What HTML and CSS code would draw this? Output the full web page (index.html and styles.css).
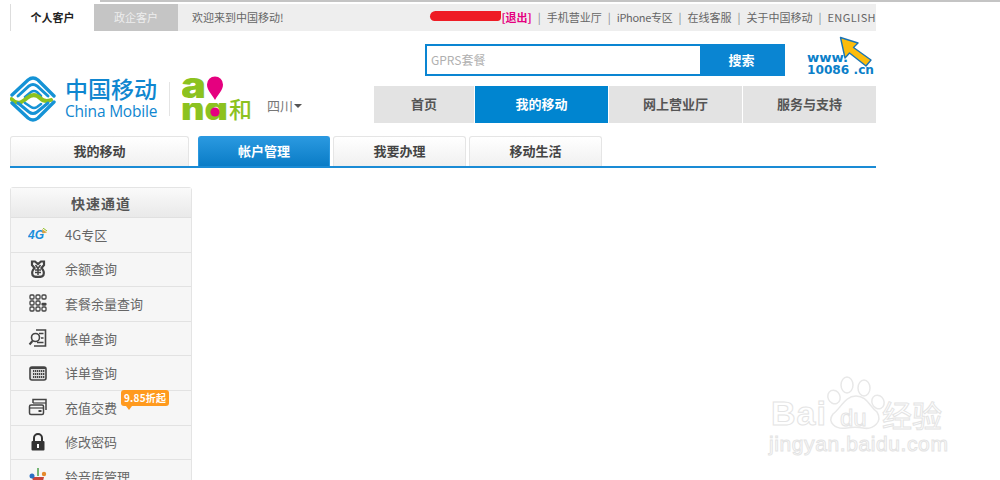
FILE: index.html
```html
<!DOCTYPE html>
<html lang="zh">
<head>
<meta charset="utf-8">
<title>中国移动</title>
<link rel="stylesheet" href="styles.css">
</head>
<body>
<div class="browser-edge"></div>
<div class="page">
  <div class="topbar">
    <a class="seg seg-on">个人客户</a>
    <a class="seg seg-off">政企客户</a>
    <span class="welcome">欢迎来到中国移动!</span>
    <div class="toplinks">
      <span class="scribble"></span><a class="logout">[退出]</a>
      <i>|</i><a>手机营业厅</a>
      <i>|</i><a class="iphone">iPhone专区</a>
      <i>|</i><a>在线客服</a>
      <i>|</i><a>关于中国移动</a>
      <i>|</i><a class="english">ENGLISH</a>
    </div>
  </div>

  <header class="header">
    <div class="brand">
      <svg class="cm-mark" viewBox="0 0 46 46" width="46" height="46" fill="none" stroke-linecap="round">
        <path d="M2 19 L18 4 Q23 0 28 4 L44 20" stroke="#1593d6" stroke-width="3.400"/>
        <path d="M8 20 L19 10 Q23 7 27 10 L38 20" stroke="#1593d6" stroke-width="3"/>
        <path d="M15 21 L21 16 Q24 14 27 16 L31 20" stroke="#1593d6" stroke-width="2.600"/>
        <path d="M1.500 23 C8 30 12 26 17 22 C22 18 26 18 30 22 C33 25 36 26 41 24" stroke="#8cc21f" stroke-width="4"/>
        <path d="M2 27 L18 42 Q23 46 28 42 L44 26" stroke="#1593d6" stroke-width="3.400"/>
        <path d="M8 27 L19 36 Q23 39 27 36 L38 27" stroke="#1593d6" stroke-width="3"/>
        <path d="M15 27 L21 31 Q24 33 27 31 L31 28" stroke="#1593d6" stroke-width="2.600"/>
      </svg>
      <div class="cm-name">
        <span class="cm-cn">中国移动</span>
        <span class="cm-en">China Mobile</span>
      </div>
      <span class="brand-sep"></span>
      <svg class="and-mark" viewBox="0 0 50 46" width="50" height="46">
        <defs><clipPath id="nd-clip"><rect x="0" y="27" width="50" height="19"/></clipPath></defs>
        <text class="and-a" x="-1" y="22" textLength="25" lengthAdjust="spacingAndGlyphs">a</text>
        <path d="M33 24 C29 17 25 14 25 8.500 A8 8 0 0 1 41 8.500 C41 14 37 17 33 24 Z" fill="#e5007f"/>
        <text class="and-nd" x="-1" y="44" textLength="47" lengthAdjust="spacingAndGlyphs" clip-path="url(#nd-clip)">nd</text>
        <circle cx="33" cy="36" r="4.600" fill="#e5007f"/>
      </svg>
      <span class="he">和</span>
      <span class="region">四川<b class="caret"></b></span>
    </div>

    <div class="header-right">
      <div class="search-row">
        <div class="search">
          <span class="search-input">GPRS套餐</span>
          <span class="search-btn">搜索</span>
        </div>
        <svg class="site-logo" viewBox="0 0 72 42" width="72" height="42">
          <text class="site-text" x="0" y="26" textLength="41" lengthAdjust="spacingAndGlyphs">www.</text>
          <text class="site-text" x="0" y="38" textLength="67" lengthAdjust="spacingAndGlyphs">10086 .cn</text>
          <path d="M33.500 1.500 L51 7 L46.500 11.500 L64 24 L59 30 L42.500 17 L38 22 Z" fill="#fcbc0c" stroke="#1b74b4" stroke-width="1.400" stroke-linejoin="round"/>
        </svg>
      </div>
      <nav class="mainnav">
        <a class="nav-home">首页</a>
        <a class="nav-on">我的移动</a>
        <a>网上营业厅</a>
        <a>服务与支持</a>
      </nav>
    </div>
  </header>

  <div class="tabs">
    <a class="tab tab-first">我的移动</a>
    <a class="tab tab-on">帐户管理</a>
    <a class="tab">我要办理</a>
    <a class="tab">移动生活</a>
  </div>

  <aside class="quick">
    <h2 class="quick-head">快速通道</h2>
    <a class="quick-row">
      <span class="ico"><svg viewBox="0 0 20 12" width="20" height="12"><text class="g4" x="0" y="11">4G</text><path d="M14 1 L19 4.500 L14.500 5.500 Z" fill="#d9a441"/><path d="M15 0 L19 3" stroke="#8cc21f" stroke-width="1"/></svg></span><span>4G专区</span>
    </a>
    <a class="quick-row">
      <span class="ico"><svg viewBox="0 0 20 20" width="20" height="20" fill="none" stroke="#444" stroke-width="2.200"><path d="M4 2.500 H7 L10 5 L13 2.500 H16 V6 L13.500 9 C15.500 11 16.500 13 15.500 16 C14.500 18.500 5.500 18.500 4.500 16 C3.500 13 4.500 11 6.500 9 L4 6 Z"/><path d="M7.500 6 L10 9.500 L12.500 6 M10 9.500 V16 M7 11 H13 M7 13.500 H13" stroke-width="1.500"/></svg></span><span>余额查询</span>
    </a>
    <a class="quick-row">
      <span class="ico"><svg viewBox="0 0 20 20" width="20" height="20" fill="none" stroke="#444" stroke-width="1.300"><rect x="2" y="2" width="4" height="4" rx="1"/><rect x="8" y="2" width="4" height="4" rx="1"/><rect x="14" y="2" width="4" height="4" rx="1"/><rect x="2" y="8" width="4" height="4" rx="1"/><rect x="8" y="8" width="4" height="4" rx="1"/><rect x="14" y="10.500" width="4" height="1.500" rx=".7"/><rect x="2" y="14" width="4" height="4" rx="1"/><rect x="8" y="14" width="4" height="4" rx="1"/><rect x="14" y="14" width="4" height="4" rx="1"/></svg></span><span>套餐余量查询</span>
    </a>
    <a class="quick-row">
      <span class="ico"><svg viewBox="0 0 20 20" width="20" height="20" fill="none" stroke="#444" stroke-width="1.600"><path d="M8 2 H17.500 V18 H6"/><circle cx="7.500" cy="9.500" r="4"/><path d="M4.500 13 L1.500 16.500" stroke-width="2"/><path d="M11 5.500 H15.500 M13 10 H15.500 M9 14.500 H15.500" stroke-width="1.400"/></svg></span><span>帐单查询</span>
    </a>
    <a class="quick-row">
      <span class="ico"><svg viewBox="0 0 20 20" width="20" height="20" fill="none" stroke="#444"><rect x="2" y="4" width="16" height="13" rx="2" fill="#ddd" stroke-width="1.600"/><path d="M2 5 H18" stroke-width="2"/><path d="M5 8 H17 M5 11 H17 M5 14 H17" stroke-width="2" stroke-dasharray="1.300 .7"/></svg></span><span>详单查询</span>
    </a>
    <a class="quick-row">
      <span class="ico"><svg viewBox="0 0 20 20" width="20" height="20" fill="none" stroke="#444" stroke-width="1.500"><path d="M5 6 V2.500 H18 V13"/><path d="M5 6 H18" stroke-width="1.200"/><rect x="1.500" y="8" width="14" height="9.500" rx="1.500"/><path d="M1.500 11 H15.500" stroke-width="1.200"/><rect x="10.500" y="13" width="3" height="2" fill="#444" stroke="none"/></svg></span><span>充值交费</span>
      <span class="promo">9.85折起</span>
    </a>
    <a class="quick-row">
      <span class="ico"><svg viewBox="0 0 20 20" width="20" height="20"><path d="M6 9 V6 A4 4 0 0 1 14 6 V9" fill="none" stroke="#333" stroke-width="2"/><rect x="3.500" y="9" width="13" height="9.500" rx="1" fill="#333"/><rect x="9" y="12" width="2" height="4" fill="#fff"/></svg></span><span>修改密码</span>
    </a>
    <a class="quick-row">
      <span class="ico"><svg viewBox="0 0 20 20" width="20" height="20"><path d="M4 11 H16 L14 19 H6 Z" fill="#c9453a"/><circle cx="4" cy="10" r="2.500" fill="#2a6fc4"/><circle cx="16" cy="8" r="2.200" fill="#e58a2c"/><path d="M10 2 V10" stroke="#4aa04a" stroke-width="1.500"/></svg></span><span>铃音库管理</span>
    </a>
  </aside>
</div>

<div class="watermark">
  <svg class="wm-paw" viewBox="0 0 64 60" width="64" height="60" fill="#fff" stroke="#e8e8e8" stroke-width="1.500">
    <ellipse cx="22" cy="11" rx="6" ry="8"/>
    <ellipse cx="39" cy="14" rx="6" ry="8"/>
    <ellipse cx="9" cy="23" rx="6" ry="7" transform="rotate(-25 9 23)"/>
    <ellipse cx="53" cy="28" rx="6" ry="7" transform="rotate(-25 53 28)"/>
    <path d="M31 22 C42 22 44 32 52 38 C58 48 48 56 38 54 C32 53 28 53 22 54 C10 56 2 48 8 40 C16 34 20 22 31 22 Z"/>
  </svg>
  <span class="wm-bai">Bai</span>
  <span class="wm-du">du</span>
  <span class="wm-jy">经验</span>
  <span class="wm-url">jingyan.baidu.com</span>
</div>
</body>
</html>
```
FILE: styles.css
```css
* { box-sizing: border-box; }
html, body { height: 480px; overflow: hidden; }
body {
  margin: 0;
  background: #fff;
  font-family: "Noto Sans CJK SC", "Liberation Sans", sans-serif;
  color: #666;
  position: relative;
}
a { color: inherit; text-decoration: none; }
.browser-edge { height: 2px; margin-left: 100px; background: #c4c4c4; }
.page { width: 866px; margin-left: 10px; padding-top: 2px; }

.topbar {
  display: flex;
  align-items: center;
  height: 27px;
  background: #eee;
  font-size: 11px;
  line-height: 27px;
  overflow: hidden;
}
.seg { width: 84px; text-align: center; flex: none; }
.seg-on { background: #fff; color: #222; font-weight: 700; border-left: 1px solid #ddd; }
.seg-off { background: #c5c5c5; color: #eee; }
.welcome { margin-left: 14px; color: #666; }
.toplinks { margin-left: auto; display: flex; align-items: center; white-space: nowrap; color: #666; }
.toplinks i { font-style: normal; color: #888; margin: 0 6px; }
.iphone { letter-spacing: -.3px; }
.english { letter-spacing: .4px; }
.scribble { width: 71px; height: 10px; margin-top: -3px; background: #ee1c25; border-radius: 6px 0 4px 5px; }
.logout { color: #e5007f; font-weight: 700; }

.header { display: flex; height: 87px; margin-top: 5px; }
.brand { width: 364px; flex: none; display: flex; align-items: flex-end; padding-bottom: 1px; color: #666; }
.cm-mark { flex: none; }
.cm-name { display: flex; flex-direction: column; margin-left: 9px; width: 94px; color: #0f86d0; padding-bottom: 1px; }
.cm-cn { font-size: 23px; line-height: 27px; font-weight: 500; white-space: nowrap; }
.cm-en { font-family: "Open Sans", sans-serif; font-size: 15.500px; line-height: 19px; letter-spacing: -.2px; white-space: nowrap; }
.brand-sep { width: 1px; height: 34px; background: #e4e4e4; margin: 0 12px 6px 10px; }
.and-mark { flex: none; margin-right: -2px; }
.and-a, .and-nd { font-family: "Inter", sans-serif; font-weight: 900; fill: #8cc21f; }
.and-a { font-size: 36px; }
.and-nd { font-size: 32px; }
.he { font-size: 23px; line-height: 28px; color: #8cc21f; font-weight: 500; width: 24px; margin-left: -1px; }
.region { margin-left: 14px; font-size: 13px; line-height: 18px; padding-bottom: 7px; color: #777; display: flex; align-items: center; }
.caret { width: 0; height: 0; margin-left: 1px; border: 4px solid transparent; border-top: 4px solid #555; border-bottom: 0; }

.header-right { flex: 1; display: flex; flex-direction: column; }
.search-row { display: flex; height: 50px; padding-left: 51px; }
.search { display: flex; width: 360px; height: 32px; margin-top: 8px; border: 2px solid #0a85d2; background: #0a85d2; }
.search-input { width: 273px; background: #fff; color: #b0b0b0; font-size: 12px; line-height: 28px; padding-left: 4px; }
.search-btn { flex: 1; color: #fff; font-size: 13px; font-weight: 700; line-height: 28px; text-align: center; }
.site-logo { margin-left: 22px; flex: none; }
.site-text { font-family: "DejaVu Sans", sans-serif; font-weight: 700; font-size: 12px; fill: #0b7fc9; }
.mainnav { display: flex; gap: 1px; height: 37px; }
.mainnav a { width: 133px; background: #e3e3e3; color: #555; font-size: 13px; font-weight: 700; line-height: 36px; text-align: center; }
.mainnav .nav-home { width: 100px; }
.mainnav .nav-on { background: #0085d0; color: #fff; }

.tabs { display: flex; gap: 3px; height: 32px; margin-top: 13px; border-bottom: 2px solid #1a8bd5; }
.tab {
  width: 133px; height: 30px;
  border: 1px solid #e5e5e5; border-bottom: 0; border-radius: 3px 3px 0 0;
  background: linear-gradient(#fff, #f0f0f0);
  color: #444; font-size: 13px; font-weight: 700; line-height: 27px; text-align: center;
}
.tab-first { width: 179px; margin-right: 6px; }
.tab-on { width: 132px; border-color: #2a98e0; background: linear-gradient(#2a99e0, #0a7cc6); color: #fff; }

.quick { width: 182px; margin-top: 19px; border: 1px solid #e4e4e4; border-radius: 3px 3px 0 0; background: #f6f6f6; }
.quick-head {
  margin: 0; height: 30px;
  background: linear-gradient(#fafafa, #e9e9e9);
  border-bottom: 1px solid #e0e0e0;
  color: #555; font-size: 14px; font-weight: 700; line-height: 30px; text-align: center; letter-spacing: 1px;
}
.quick-row { position: relative; display: flex; align-items: center; height: 34.600px; padding-bottom: 1px; border-bottom: 1px solid #e2e2e2; font-size: 13px; color: #666; }
.ico { width: 54px; flex: none; display: flex; justify-content: center; align-items: center; }
.g4 { font-family: "Liberation Sans", sans-serif; font-style: italic; font-weight: 700; font-size: 12px; fill: #1a8fdc; }
.promo {
  position: absolute; left: 110px; top: -1px;
  height: 16px; padding: 0 3px;
  background: #ff9a1e; border-radius: 3px;
  color: #fff; font-size: 10px; font-weight: 700; line-height: 16px; white-space: nowrap; letter-spacing: .2px;
}
.promo::after {
  content: ""; position: absolute; left: 5px; top: 16px;
  border: 3px solid transparent; border-top: 4px solid #ff9a1e; border-bottom: 0;
}

.watermark { position: absolute; left: 765px; top: 372px; width: 190px; height: 88px; }
.wm-paw { position: absolute; left: 60px; top: 2px; }
.wm-bai, .wm-du, .wm-jy, .wm-url {
  position: absolute; color: #fff; -webkit-text-stroke: 1px #e4e4e4; font-family: "Liberation Sans", sans-serif; white-space: nowrap;
}
.wm-bai { left: 6px; top: 22px; font-size: 34px; font-weight: 700; line-height: 38px; letter-spacing: 1px; }
.wm-du { left: 75px; top: 33px; font-size: 24px; line-height: 26px; }
.wm-jy { left: 117px; top: 25px; font-size: 30px; line-height: 34px; font-family: "Noto Sans CJK SC", sans-serif; }
.wm-url { left: 4px; top: 60px; font-size: 21px; line-height: 24px; letter-spacing: .6px; }
```
